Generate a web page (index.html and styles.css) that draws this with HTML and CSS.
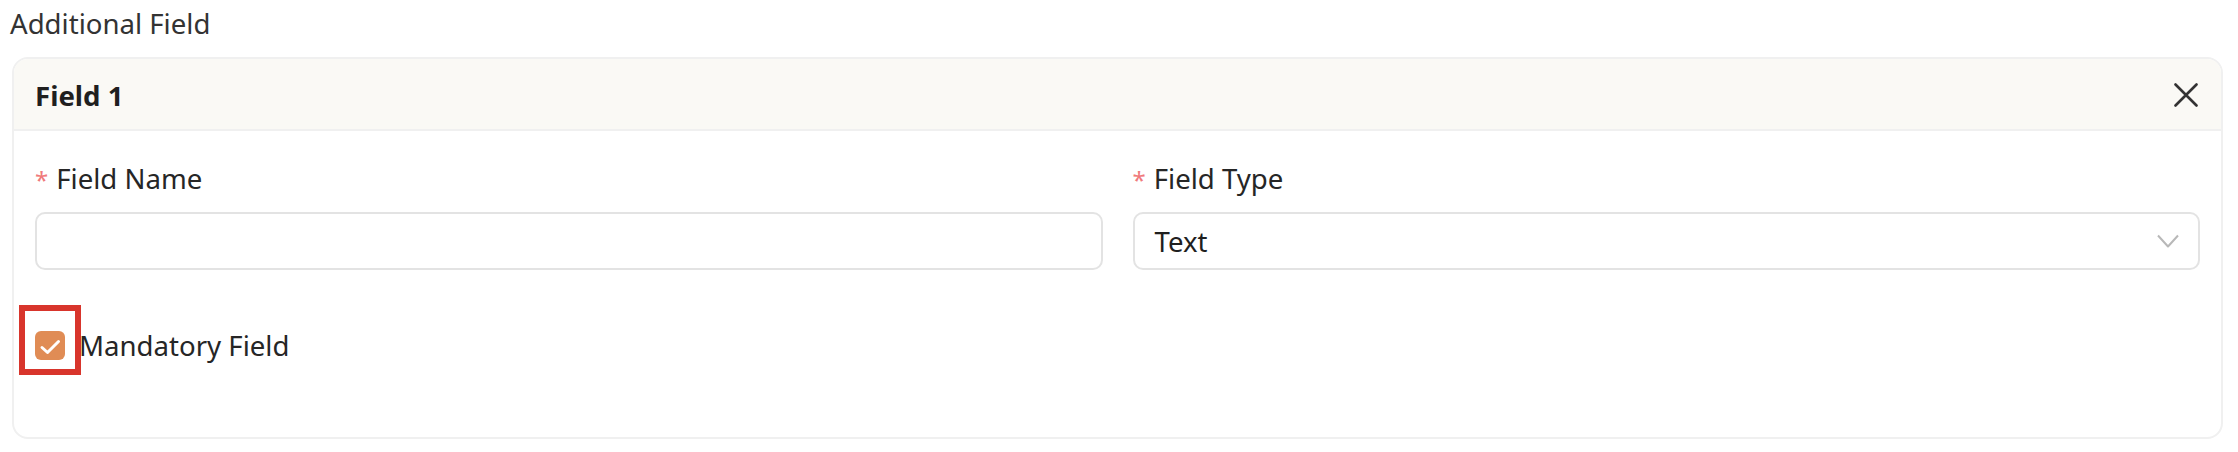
FILE: index.html
```html
<!DOCTYPE html>
<html lang="en">
<head>
<meta charset="utf-8">
<title>Additional Field</title>
<link rel="stylesheet" href="styles.css">
</head>
<body>
<div class="page">
  <div class="section-title">Additional Field</div>
  <div class="card">
    <div class="card-head">
      <div class="card-title">Field 1</div>
      <button class="close" aria-label="Close">
        <svg viewBox="0 0 24 24" width="24" height="24"><path d="M1.5 1.5 L22.5 22.5 M22.5 1.5 L1.5 22.5" stroke="#333" stroke-width="2.6" stroke-linecap="round" fill="none"/></svg>
      </button>
    </div>
    <div class="card-body">
      <div class="row">
        <div class="field">
          <label class="label"><span class="req">*</span>Field Name</label>
          <div class="input"></div>
        </div>
        <div class="field">
          <label class="label"><span class="req">*</span>Field Type</label>
          <div class="input select">
            <span class="value">Text</span>
            <svg class="chev" viewBox="0 0 22 14" width="22" height="14"><path d="M1 1.5 L11 12.5 L21 1.5" stroke="#b8b8b8" stroke-width="2" fill="none" stroke-linejoin="round"/></svg>
          </div>
        </div>
      </div>
      <div class="check-row">
        <span class="checkbox">
          <svg viewBox="0 0 30 29" width="30" height="29"><path d="M7 16.5 L12.5 21.5 L23.5 10.5" stroke="#fff" stroke-width="3" fill="none" stroke-linecap="round" stroke-linejoin="round"/></svg>
          <span class="highlight"></span>
        </span>
        <span class="check-label">Mandatory Field</span>
      </div>
    </div>
  </div>
</div>
</body>
</html>
```

FILE: styles.css
```css
* { box-sizing: border-box; }
html, body { margin: 0; padding: 0; background: #fff; }
body {
  font-family: "Noto Sans", "Open Sans", sans-serif;
  color: #262626;
  font-size: 27.6px;
}
.page { padding: 0 15px 0 12px; }
.section-title {
  height: 57px;
  line-height: 40px;
  padding-top: 3px;
  margin-left: -2px;
  color: #333;
}
.card {
  border: 2px solid #f0f0f0;
  border-radius: 16px;
  height: 382px;
}
.card-head {
  height: 72px;
  background: #faf9f5;
  border-bottom: 2px solid #f0f0f0;
  border-radius: 14px 14px 0 0;
  display: flex;
  align-items: center;
  justify-content: space-between;
  padding: 0 23px 0 21px;
}
.card-title { font-weight: 700; color: #1f1f1f; margin-top: 1px; }
.close {
  border: 0;
  background: transparent;
  padding: 0;
  width: 24px;
  height: 24px;
  display: flex;
  margin-top: 2px;
}
.card-body { padding: 27px 21px 0 21px; }
.row {
  display: grid;
  grid-template-columns: 1fr 1fr;
  column-gap: 30px;
}
.field { display: flex; flex-direction: column; gap: 14px; }
.label { line-height: 40px; height: 40px; display: flex; align-items: center; }
.req {
  color: #f07a7c;
  font-size: 24px;
  margin-right: 8px;
  margin-top: 4px;
}
.input {
  height: 58px;
  border: 2px solid #e3e3e3;
  border-radius: 10px;
  background: #fff;
}
.select {
  display: flex;
  align-items: center;
  justify-content: space-between;
  padding: 0 19px 0 20px;
}
.value { color: #1f1f1f; }
.chev { display: block; }
.check-row {
  display: flex;
  align-items: center;
  gap: 14px;
  margin-top: 55px;
  height: 40px;
}
.checkbox {
  position: relative;
  width: 30px;
  height: 29px;
  background: #e08c55;
  border-radius: 6px;
  display: flex;
}
.highlight {
  position: absolute;
  left: -16px;
  top: -26px;
  width: 62px;
  height: 70px;
  border: 6px solid #d8352c;
}
.check-label { color: #262626; }
```
